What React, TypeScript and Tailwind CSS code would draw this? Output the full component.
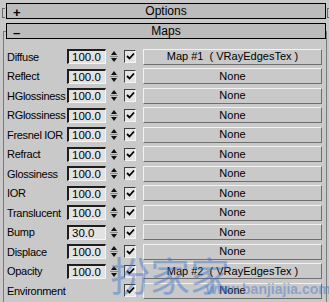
const rows: { label: string; value?: string; map: string }[] = [
  { label: "Diffuse", value: "100.0", map: "Map #1  ( VRayEdgesTex )" },
  { label: "Reflect", value: "100.0", map: "None" },
  { label: "HGlossiness", value: "100.0", map: "None" },
  { label: "RGlossiness", value: "100.0", map: "None" },
  { label: "Fresnel IOR", value: "100.0", map: "None" },
  { label: "Refract", value: "100.0", map: "None" },
  { label: "Glossiness", value: "100.0", map: "None" },
  { label: "IOR", value: "100.0", map: "None" },
  { label: "Translucent", value: "100.0", map: "None" },
  { label: "Bump", value: "30.0", map: "None" },
  { label: "Displace", value: "100.0", map: "None" },
  { label: "Opacity", value: "100.0", map: "Map #2  ( VRayEdgesTex )" },
  { label: "Environment", map: "None" },
];

function Spinner() {
  return (
    <svg width="8" height="15" viewBox="0 0 8 15" className="ml-[4px] shrink-0">
      <polygon points="4,2 7,6 1,6" fill="#111" />
      <line x1="0" y1="7.5" x2="8" y2="7.5" stroke="#8a8a8a" strokeWidth="1" />
      <polygon points="1,9 7,9 4,13" fill="#111" />
    </svg>
  );
}

function Check() {
  return (
    <div className="w-[12px] h-[13px] shrink-0 bg-[#e4e4e4] border-t border-l border-[#404040] border-b border-r border-b-[#f4f4f4] border-r-[#f4f4f4] flex items-center justify-center">
      <svg width="9" height="9" viewBox="0 0 9 9">
        <path d="M1 4 L3.5 6.5 L8 1.5" fill="none" stroke="#000" strokeWidth="1.8" />
      </svg>
    </div>
  );
}

function Header({ sign, title }: { sign: string; title: string }) {
  return (
    <div className="relative z-10 ml-[6px] w-[320px] h-[16px] border border-black bg-[#bcbcbc] flex items-center">
      <span className="absolute left-[6px] top-[-1px] text-[13px] font-bold">{sign}</span>
      <span className="w-full text-center text-[12px]">{title}</span>
    </div>
  );
}

export default function App() {
  return (
    <div
      className="relative w-[329px] h-[302px] overflow-hidden bg-[#c9c9c9] text-[11px] text-black pt-[3px]"
      style={{ fontFamily: '"Liberation Sans", Arial, sans-serif' }}
    >
      <div className="relative">
        <div className="absolute left-[2px] top-[5px] w-[3px] h-[10px] border-l border-t border-b border-[#6a6a6a]" />
        <div className="absolute left-[327px] top-[5px] w-[2px] h-[10px] border-l border-t border-b border-[#6a6a6a]" />
        <Header sign="+" title="Options" />
      </div>
      <div className="mt-[4px]">
        <Header sign="–" title="Maps" />
      </div>
      <div className="mt-[-8px] ml-[3px] w-[324px] h-[300px] border-l border-t border-r border-[#7a7a7a] pt-[15px] pl-[3px]">
        {rows.map((r) => (
          <div key={r.label} className="h-[19.5px] flex items-center">
            <div className="w-[60px] shrink-0 whitespace-nowrap tracking-[-0.3px]">{r.label}</div>
            {r.value ? (
              <>
                <div className="w-[39px] h-[15px] shrink-0 bg-[#e2e2e2] border-t-2 border-l-2 border-[#1e1e1e] border-b border-r border-b-[#f4f4f4] border-r-[#f4f4f4] pl-[3px] leading-[12px] text-[11.5px]">
                  {r.value}
                </div>
                <Spinner />
              </>
            ) : (
              <div className="w-[51px] shrink-0" />
            )}
            <div className="ml-[6px]">
              <Check />
            </div>
            <button className="ml-[7px] w-[179px] h-[16px] shrink-0 bg-[#c9c9c9] border-t border-l border-[#f2f2f2] border-b border-r border-b-[#6e6e6e] border-r-[#6e6e6e] flex items-center justify-center whitespace-pre leading-none">
              {r.map}
            </button>
          </div>
        ))}
      </div>
      <div
        className="absolute left-[110px] top-[254px] text-[40px] leading-none text-[#3f74cc] opacity-45 pointer-events-none"
        style={{ fontFamily: '"Noto Sans CJK SC", sans-serif' }}
      >
        扮家家
      </div>
      <div className="absolute left-[206px] top-[282px] text-[14px] font-bold leading-none text-[#3f74cc] opacity-45 pointer-events-none">
        www.banjiajia.com
      </div>
    </div>
  );
}
